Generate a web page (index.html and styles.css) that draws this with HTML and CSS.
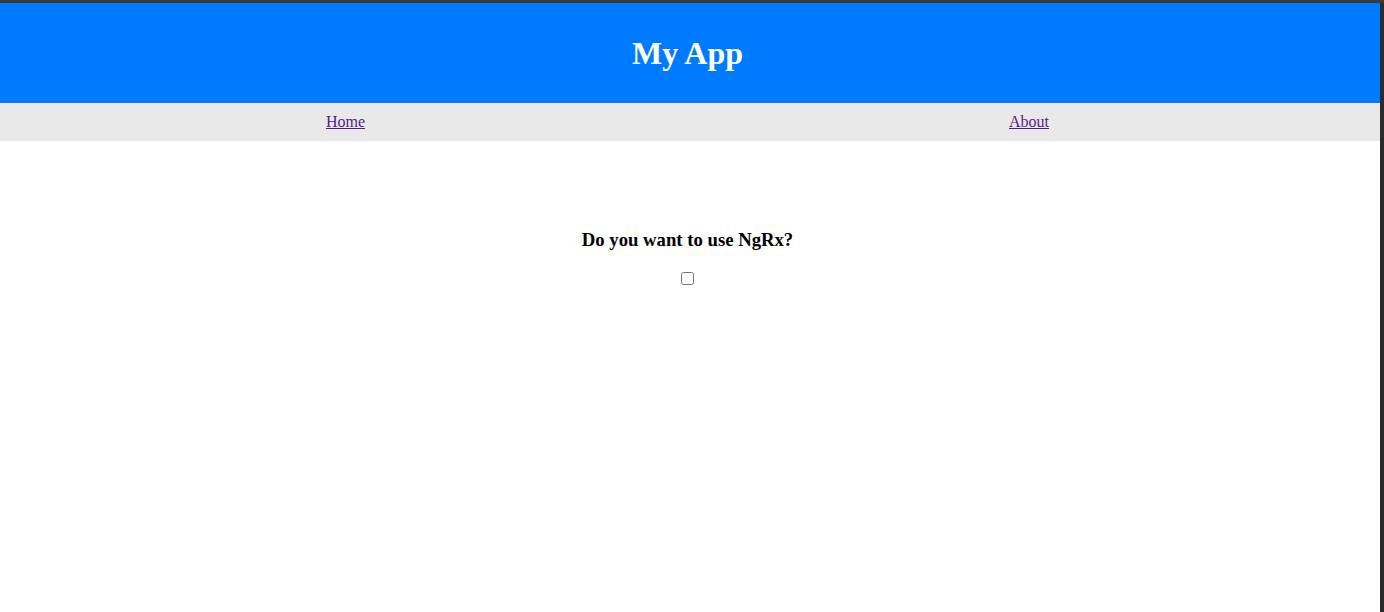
FILE: index.html
```html
<!DOCTYPE html>
<html lang="en">
<head>
    <meta charset="UTF-8">
    <meta name="viewport" content="width=device-width, initial-scale=1.0">
    <title>My App</title>
    <link rel="stylesheet" href="styles.css">
</head>
<body>
    <div class="app">
        <header class="app-header">
            <h1>My App</h1>
        </header>

        <nav class="app-nav">
            <a href="#">Home</a>
            <a href="#">About</a>
        </nav>

        <main class="content">
            <h3>Do you want to use NgRx?</h3>
            <input type="checkbox" class="ngrx-check">
        </main>
    </div>
</body>
</html>
```

FILE: styles.css
```css
html, body {
    height: 100%;
}

body {
    margin: 0;
    font-family: "Liberation Serif", "Times New Roman", serif;
    background-color: #2b2b2b;
    border-top: 3px solid #3a3a3a;
    padding-right: 4px;
    box-sizing: border-box;
}

.app {
    height: 100%;
    background-color: #ffffff;
}

.app-header {
    height: 100px;
    display: flex;
    justify-content: center;
    align-items: center;
    padding-right: 5px;
    background-color: #007bff;
    color: white;
}

.app-header h1 {
    margin: 0;
    font-size: 32px;
}

.app-nav {
    height: 38px;
    display: flex;
    justify-content: space-around;
    align-items: center;
    padding: 0 9px 0 4px;
    background-color: #e9e9e9;
}

.app-nav a {
    font-size: 16px;
    color: #551a8b;
}

.content {
    display: flex;
    flex-direction: column;
    align-items: center;
    padding: 88px 5px 0 0;
}

.content h3 {
    margin: 0 0 21px;
    font-size: 18.72px;
}

.ngrx-check {
    margin: 0;
    width: 13px;
    height: 13px;
}
```
